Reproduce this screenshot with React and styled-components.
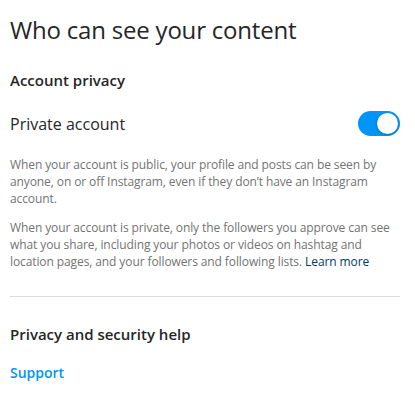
import React from 'react';
import styled, { createGlobalStyle } from 'styled-components';

const GlobalStyle = createGlobalStyle`
  body {
    margin: 0;
    background: #ffffff;
    font-family: "Open Sans", "Noto Sans", sans-serif;
    color: #262626;
  }
`;

const Page = styled.main`
  padding: 14px 15px 0 10px;
  width: 390px;
`;

const Title = styled.h1`
  margin: 0;
  font-size: 24px;
  font-weight: 400;
  line-height: 32px;
  letter-spacing: -0.2px;
`;

const SectionTitle = styled.h2`
  margin: ${props => props.$top || '24px'} 0 0;
  font-size: 15px;
  font-weight: 600;
  line-height: 20px;
`;

const Row = styled.div`
  display: flex;
  align-items: center;
  justify-content: space-between;
  margin-top: 21px;
`;

const RowLabel = styled.span`
  font-size: 16px;
  line-height: 24px;
`;

const Switch = styled.button`
  position: relative;
  width: 42px;
  height: 25px;
  border: none;
  border-radius: 13px;
  padding: 0;
  background: #0095f6;
  cursor: pointer;
`;

const Knob = styled.span`
  position: absolute;
  top: 2px;
  right: 2px;
  width: 21px;
  height: 21px;
  border-radius: 50%;
  background: #ffffff;
  box-shadow: 0 1px 3px rgba(0, 0, 0, 0.25);
`;

const Paragraph = styled.p`
  margin: ${props => props.$top} 0 0;
  font-size: 12px;
  line-height: 17px;
  letter-spacing: -0.1px;
  color: #737373;
`;

const InlineLink = styled.a`
  color: #00376b;
  text-decoration: none;
`;

const Divider = styled.hr`
  margin: 26px 0 0;
  border: none;
  border-top: 1px solid #dbdbdb;
`;

const SupportLink = styled.a`
  display: block;
  margin-top: 20px;
  font-size: 14px;
  font-weight: 600;
  line-height: 18px;
  color: #0095f6;
  text-decoration: none;
`;

export default function App() {
  return (
    <>
      <GlobalStyle />
      <Page>
        <Title>Who can see your content</Title>
        <SectionTitle>Account privacy</SectionTitle>
        <Row>
          <RowLabel>Private account</RowLabel>
          <Switch role="switch" aria-checked="true">
            <Knob />
          </Switch>
        </Row>
        <Paragraph $top="20px">
          When your account is public, your profile and posts can be seen by anyone, on or off Instagram, even if they don’t have an Instagram account.
        </Paragraph>
        <Paragraph $top="12px">
          When your account is private, only the followers you approve can see what you share, including your photos or videos on hashtag and location pages, and your followers and following lists. <InlineLink href="#">Learn more</InlineLink>
        </Paragraph>
        <Divider />
        <SectionTitle $top="27px">Privacy and security help</SectionTitle>
        <SupportLink href="#">Support</SupportLink>
      </Page>
    </>
  );
}
